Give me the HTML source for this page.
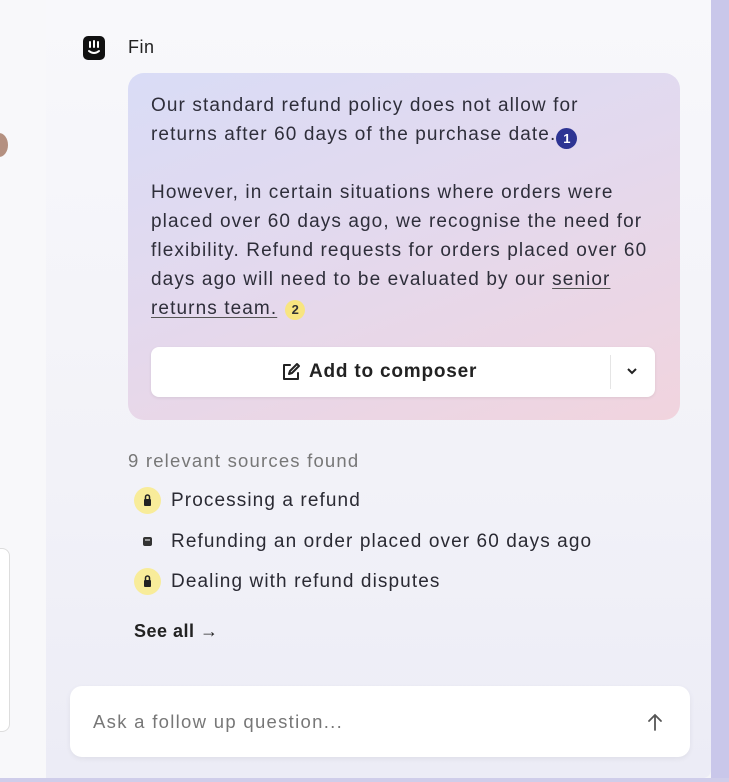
<!DOCTYPE html>
<html><head><meta charset="utf-8"><style>
*{margin:0;padding:0;box-sizing:border-box}
body{width:729px;height:782px;overflow:hidden;background:#f4f4f7;font-family:"Liberation Sans",sans-serif;position:relative;color:#2a2a35}
.left{position:absolute;left:0;top:0;width:46px;height:782px;background:#f8f8fa}
.panel{position:absolute;left:46px;top:0;width:665px;height:778px;background:linear-gradient(180deg,#f8f8fb 0%,#f2f2f8 60%,#ececf6 100%);border-radius:0 0 8px 0}
.edge{position:absolute;left:711px;top:0;width:18px;height:782px;background:#c9c7ea}
.bottom{position:absolute;left:0;top:778px;width:729px;height:4px;background:#cfcdea}
.logo{position:absolute;left:83px;top:36px;width:22px;height:24px;background:#111;border-radius:5px}
.fin{position:absolute;left:128px;top:37px;font-size:18px;color:#222;letter-spacing:.5px}
.bubble{position:absolute;left:128px;top:73px;width:552px;height:347px;border-radius:16px;background:linear-gradient(160deg,#d9dcf6 0%,#e3d9ee 45%,#f1d4de 100%)}
.txt{position:absolute;left:151px;top:91px;width:540px;font-size:19px;line-height:29px;color:#2e2e3a;letter-spacing:1.1px;white-space:nowrap}
u{text-decoration-color:#555;text-underline-offset:3px}
.b1{display:inline-block;width:21px;height:21px;border-radius:50%;background:#2d3493;color:#fff;font-size:13px;line-height:21px;text-align:center;font-weight:bold;vertical-align:-3px;letter-spacing:0}
.b2{display:inline-block;width:20px;height:20px;border-radius:50%;background:#f8e580;color:#333;font-size:13px;line-height:20px;text-align:center;font-weight:bold;margin-left:8px;letter-spacing:0}
.btn{position:absolute;left:151px;top:347px;width:504px;height:50px;background:#fff;border-radius:8px;box-shadow:0 1px 3px rgba(0,0,0,.08)}
.btn .l{position:absolute;top:14px;font-size:19px;font-weight:bold;color:#222;letter-spacing:.8px}
.btn .sep{position:absolute;left:459px;top:8px;width:1px;height:34px;background:#e5e5e5}
.src{position:absolute;left:128px;top:450px;font-size:18.5px;color:#777;letter-spacing:1.2px}
.item{position:absolute;left:134px;font-size:19px;color:#2a2a33;letter-spacing:1.1px}
.item .ic{position:absolute;left:0;top:-3px;width:27px;height:27px;border-radius:50%;background:#f8ec9a}
.item span.t{position:absolute;left:37px;top:0;white-space:nowrap}
.see{position:absolute;left:134px;top:621px;font-size:18px;font-weight:bold;color:#222;letter-spacing:.5px}
.input{position:absolute;left:70px;top:686px;width:620px;height:71px;background:#fff;border-radius:12px;box-shadow:0 2px 6px rgba(0,0,0,.06)}
.input .p{position:absolute;left:23px;top:25px;font-size:18.5px;color:#777;letter-spacing:1.3px}
.card{position:absolute;left:-10px;top:548px;width:20px;height:184px;border:1px solid #ddd;border-radius:8px;background:#fff}
.blob{position:absolute;left:-10px;top:133px;width:18px;height:24px;border-radius:50%;background:#b49080}
</style></head><body>
<div class="left"></div>
<div class="blob"></div>
<div class="card"></div>
<div class="panel"></div>
<div class="edge"></div>
<div class="bottom"></div>
<div class="logo"><svg width="22" height="24" viewBox="0 0 22 24"><g stroke="#fff" stroke-width="2" stroke-linecap="round" fill="none"><path d="M7 6v5M11 5v6M15 6v5"/><path d="M6 15q5 4 10 0"/></g></svg></div>
<div class="fin">Fin</div>
<div class="bubble"></div>
<div class="txt">Our standard refund policy does not allow for<br>returns after 60 days of the purchase date.<span class="b1">1</span><br><br>However, in certain situations where orders were<br>placed over 60 days ago, we recognise the need for<br>flexibility. Refund requests for orders placed over 60<br>days ago will need to be evaluated by our <u>senior</u><br><u>returns team.</u><span class="b2">2</span></div>
<div class="btn">
<svg style="position:absolute;left:130px;top:15px" width="20" height="20" viewBox="0 0 20 20"><g fill="none" stroke="#222" stroke-width="2" stroke-linecap="round" stroke-linejoin="round"><path d="M9 3H3v14h14v-6"/><path d="M8 12l1-3 7-7 2 2-7 7z"/></g></svg>
<span class="l" style="left:158px">Add to composer</span>
<div class="sep"></div>
<svg style="position:absolute;left:475px;top:19px" width="12" height="10" viewBox="0 0 12 10"><path d="M2 3l4 4 4-4" fill="none" stroke="#222" stroke-width="2"/></svg>
</div>
<div class="src">9 relevant sources found</div>
<div class="item" style="top:490px"><div class="ic"><svg width="27" height="27" viewBox="0 0 27 27"><rect x="10" y="12" width="7" height="7" rx="1" fill="#222"/><path d="M11.5 12v-2a2 2 0 0 1 4 0v2" fill="none" stroke="#222" stroke-width="1.5"/></svg></div><span class="t">Processing a refund</span></div>
<div class="item" style="top:531px"><div class="ic" style="background:none"><svg width="27" height="27" viewBox="0 0 27 27"><rect x="9" y="9" width="9" height="9" rx="2" fill="#333"/><path d="M11 12h5" stroke="#fff" stroke-width="1"/></svg></div><span class="t">Refunding an order placed over 60 days ago</span></div>
<div class="item" style="top:571px"><div class="ic"><svg width="27" height="27" viewBox="0 0 27 27"><rect x="10" y="12" width="7" height="7" rx="1" fill="#222"/><path d="M11.5 12v-2a2 2 0 0 1 4 0v2" fill="none" stroke="#222" stroke-width="1.5"/></svg></div><span class="t">Dealing with refund disputes</span></div>
<div class="see">See all →</div>
<div class="input"><span class="p">Ask a follow up question...</span>
<svg style="position:absolute;left:577px;top:26px" width="16" height="20" viewBox="0 0 16 20"><path d="M8 18V3M2 9l6-6 6 6" fill="none" stroke="#555" stroke-width="1.8" stroke-linecap="round"/></svg></div>
</body></html>
